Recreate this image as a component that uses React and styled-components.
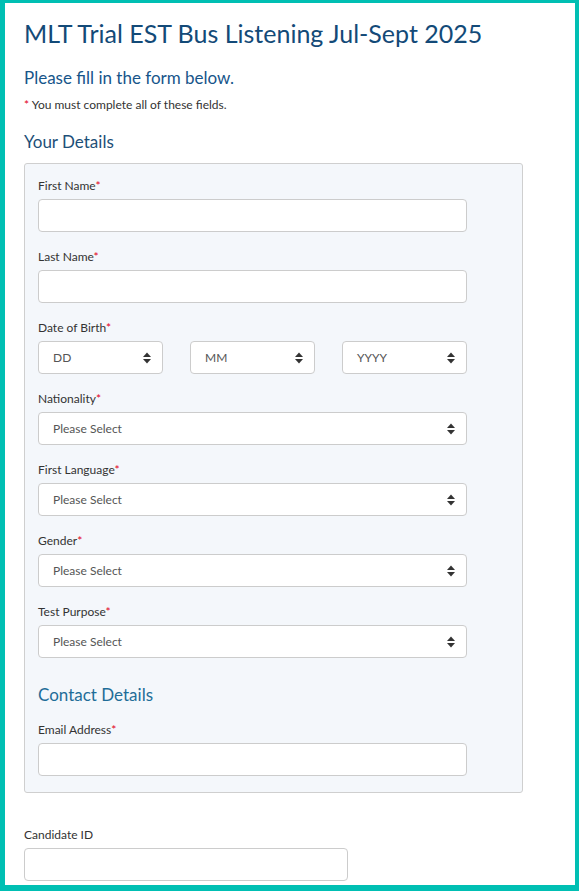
import React from "react";
import styled, { createGlobalStyle } from "styled-components";

const Global = createGlobalStyle`
  html, body { margin: 0; padding: 0; background: #ffffff; }
  body { font-family: "Lato", "Open Sans", sans-serif; }
  * { box-sizing: border-box; }
`;

const Frame = styled.div`
  width: 579px;
  height: 891px;
  overflow: hidden;
  border-style: solid;
  border-color: #00bfb3;
  border-width: 3px 4px 6px 5px;
  background: #ffffff;
`;

const Content = styled.div`
  padding: 0 0 0 19px;
`;

const Title = styled.h1`
  margin: 14px 0 0 0;
  font-size: 25px;
  line-height: 32px;
  font-weight: 400;
  color: #134a78;
`;

const Subtitle = styled.h2`
  margin: 17px 0 0 0;
  font-size: 17px;
  line-height: 24px;
  font-weight: 400;
  color: #17558a;
`;

const Note = styled.p`
  margin: 7px 0 0 0;
  font-size: 12px;
  line-height: 16px;
  color: #333333;
`;

const Req = styled.span`
  color: #e2001a;
`;

const SectionHeading = styled.h3`
  margin: ${(p) => p.$top || 15}px 0 ${(p) => p.$bottom || 10}px 0;
  font-size: 17px;
  line-height: 22px;
  font-weight: 400;
  color: ${(p) => p.$color || "#1d4f78"};
`;

const Panel = styled.div`
  width: 499px;
  border: 1px solid #cfcfcf;
  border-radius: 3px;
  background: #f4f7fb;
  padding: 14px 13px 16px 13px;
`;

const Field = styled.div`
  margin-bottom: ${(p) => (p.$last ? 0 : 17)}px;
`;

const Label = styled.label`
  display: block;
  font-size: 12px;
  line-height: 16px;
  color: #333333;
  margin-bottom: 5px;
`;

const Input = styled.div`
  width: ${(p) => p.$width || 429}px;
  height: 33px;
  border: 1px solid #cccccc;
  border-radius: 4px;
  background: #ffffff;
`;

const SelectBox = styled.div`
  width: ${(p) => p.$width || 429}px;
  height: 33px;
  border: 1px solid #cccccc;
  border-radius: 4px;
  background: #ffffff;
  display: flex;
  align-items: center;
  justify-content: space-between;
  padding: 0 10px 0 14px;
  font-size: 12px;
  color: #555555;
`;

const DateRow = styled.div`
  display: grid;
  grid-template-columns: 125px 125px 125px;
  column-gap: 27px;
`;

const Outside = styled.div`
  margin-top: 34px;
`;

const Arrows = () => (
  <svg width="10" height="14" viewBox="0 0 10 14" aria-hidden="true">
    <path d="M5 1.5 L9 6 H1 Z" fill="#333" />
    <path d="M5 12.5 L9 8 H1 Z" fill="#333" />
  </svg>
);

const Select = ({ text, width }) => (
  <SelectBox $width={width}>
    <span>{text}</span>
    <Arrows />
  </SelectBox>
);

export default function App() {
  return (
    <>
      <Global />
      <Frame>
        <Content>
          <Title>MLT Trial EST Bus Listening Jul-Sept 2025</Title>
          <Subtitle>Please fill in the form below.</Subtitle>
          <Note>
            <Req>*</Req> You must complete all of these fields.
          </Note>
          <SectionHeading $top={18} $bottom={10}>Your Details</SectionHeading>
          <Panel>
            <Field>
              <Label>First Name<Req>*</Req></Label>
              <Input />
            </Field>
            <Field>
              <Label>Last Name<Req>*</Req></Label>
              <Input />
            </Field>
            <Field>
              <Label>Date of Birth<Req>*</Req></Label>
              <DateRow>
                <Select text="DD" width={125} />
                <Select text="MM" width={125} />
                <Select text="YYYY" width={125} />
              </DateRow>
            </Field>
            <Field>
              <Label>Nationality<Req>*</Req></Label>
              <Select text="Please Select" />
            </Field>
            <Field>
              <Label>First Language<Req>*</Req></Label>
              <Select text="Please Select" />
            </Field>
            <Field>
              <Label>Gender<Req>*</Req></Label>
              <Select text="Please Select" />
            </Field>
            <Field $last>
              <Label>Test Purpose<Req>*</Req></Label>
              <Select text="Please Select" />
            </Field>
            <SectionHeading $top={26} $bottom={16} $color="#1f6d98">Contact Details</SectionHeading>
            <Field $last>
              <Label>Email Address<Req>*</Req></Label>
              <Input />
            </Field>
          </Panel>
          <Outside>
            <Field $last>
              <Label>Candidate ID</Label>
              <Input $width={324} />
            </Field>
          </Outside>
        </Content>
      </Frame>
    </>
  );
}
